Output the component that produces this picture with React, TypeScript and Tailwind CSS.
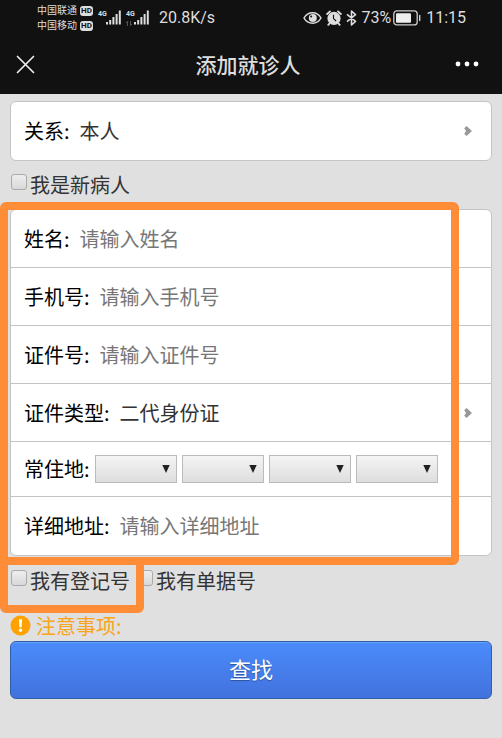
import { useState } from "react";
import type { ReactNode } from "react";

const regions = ["省", "市", "区县", "街道"];

export default function App() {
  const [relation, setRelation] = useState("本人");
  const [idType, setIdType] = useState("二代身份证");

  return (
    <div className="min-h-screen bg-[#e0e0e0] font-['Noto_Sans_CJK_SC',sans-serif] text-xl text-[#333]">
      <header className="bg-[#111] pb-[2px] text-[#ddd]">
        <StatusBar />
        <div className="grid h-14 grid-cols-[1fr_auto_1fr] items-center pr-[22px] pl-4">
          <button type="button" aria-label="关闭" className="justify-self-start">
            <svg width="19" height="19" viewBox="0 0 19 19" fill="none">
              <path
                d="M1.5 1.5l16 16M17.5 1.5l-16 16"
                stroke="#eee"
                strokeWidth="1.7"
                strokeLinecap="round"
              />
            </svg>
          </button>
          <h1 className="text-[21px] leading-7 font-medium">添加就诊人</h1>
          <button type="button" aria-label="更多" className="justify-self-end">
            <svg width="26" height="8" viewBox="0 0 26 8" fill="#fff">
              <circle cx="4" cy="4" r="2.4" />
              <circle cx="13" cy="4" r="2.4" />
              <circle cx="22" cy="4" r="2.4" />
            </svg>
          </button>
        </div>
      </header>

      <form className="px-[10px] pt-[7px]" onSubmit={(e) => e.preventDefault()}>
        <Card>
          <Row id="relation" label="关系:">
            <Picker
              id="relation"
              value={relation}
              options={["本人", "父母", "子女"]}
              onChange={setRelation}
            />
          </Row>
        </Card>

        <div className="flex h-12 items-center">
          <Check text="我是新病人" />
        </div>

        <div className="relative">
          <Card>
            <Row id="name" label="姓名:">
              <TextBox id="name" placeholder="请输入姓名" />
            </Row>
            <Row id="phone" label="手机号:">
              <TextBox id="phone" placeholder="请输入手机号" />
            </Row>
            <Row id="idNo" label="证件号:">
              <TextBox id="idNo" placeholder="请输入证件号" />
            </Row>
            <Row id="idType" label="证件类型:">
              <Picker
                id="idType"
                value={idType}
                options={["二代身份证", "护照"]}
                onChange={setIdType}
              />
            </Row>
            <div className="flex h-[55px] items-center gap-[5px] pr-[53px] pl-[13px]">
              <label htmlFor="region-0" className="shrink-0 text-black">
                常住地:
              </label>
              {regions.map((region, i) => (
                <div key={region} className="relative min-w-0 flex-1">
                  <select
                    id={`region-${i}`}
                    aria-label={region}
                    className="block h-7 w-full appearance-none border border-[#bbb] bg-linear-to-b from-[#f4f4f4] to-[#dedede]"
                  >
                    <option></option>
                  </select>
                  <svg
                    width="8"
                    height="8"
                    viewBox="0 0 8 8"
                    fill="#222"
                    className="pointer-events-none absolute top-[10px] right-[7px]"
                  >
                    <path d="M0.3 0h7.4L4 8z" />
                  </svg>
                </div>
              ))}
            </div>
            <Row id="address" label="详细地址:">
              <TextBox id="address" placeholder="请输入详细地址" />
            </Row>
          </Card>
          <div className="pointer-events-none absolute -top-[7px] right-[33px] -bottom-[9px] -left-[10px] rounded-md border-8 border-[#ff8c37]" />
        </div>

        <div className="flex h-[50px] items-center gap-[6px]">
          <div className="relative">
            <Check text="我有登记号" />
            <div className="pointer-events-none absolute -top-[10px] -right-[14px] -bottom-[18px] -left-[10px] rounded-b-md border-8 border-[#ff8c37]" />
          </div>
          <Check text="我有单据号" />
        </div>

        <p className="mt-1 flex h-[31px] items-center gap-[5px] text-[#f9a41a]">
          <svg width="21" height="21" viewBox="0 0 21 21">
            <circle cx="10.5" cy="10.5" r="10" fill="#ffa200" />
            <path d="M8.9 4.2h3.2l-.5 8.1H9.4z" fill="#fff" />
            <circle cx="10.5" cy="15.3" r="1.7" fill="#fff" />
          </svg>
          注意事项:
        </p>

        <button
          type="submit"
          className="block h-[58px] w-full rounded-md border border-[#2f5fa8] bg-linear-to-b from-[#4b8bfb] to-[#4272de] pb-1 text-[22px] text-white shadow-[inset_0_1px_0_#6b9ffc] text-shadow-[0_1px_1px_#2c559c]"
        >
          查找
        </button>
      </form>
    </div>
  );
}

function StatusBar() {
  return (
    <div className="flex h-9 items-center justify-between pr-9 pl-[37px] font-[Roboto,'Noto_Sans_CJK_SC',sans-serif] text-base">
      <div className="flex items-center">
        <div className="text-[10px] leading-[15px]">
          <Carrier name="中国联通" />
          <Carrier name="中国移动" />
        </div>
        <div className="ml-[5px] flex gap-[5px]">
          <Signal />
          <Signal dim />
        </div>
        <span className="ml-[10px]">20.8K/s</span>
      </div>
      <div className="flex items-center">
        <svg width="19" height="14" viewBox="0 0 19 14" fill="none">
          <path
            d="M1 7C3 3.4 6 1.8 9.5 1.8S16 3.4 18 7c-2 3.6-5 5.2-8.5 5.2S3 10.6 1 7z"
            stroke="#ddd"
            strokeWidth="1.5"
          />
          <circle cx="9.8" cy="7" r="4" fill="#ddd" />
          <circle cx="8.2" cy="5.4" r="1" fill="#111" />
        </svg>
        <svg width="16" height="16" viewBox="0 0 16 16" fill="none" className="ml-1">
          <circle cx="8" cy="8.4" r="6.6" fill="#ddd" />
          <path
            d="M1.2 4L4 1.4M14.8 4L12 1.4M3.6 13.4l-1.3 1.4M12.4 13.4l1.3 1.4"
            stroke="#ddd"
            strokeWidth="1.9"
            strokeLinecap="round"
          />
          <path d="M7.5 4.8v3.8l2.6 2.4" stroke="#111" strokeWidth="1.1" />
        </svg>
        <svg width="11" height="16" viewBox="0 0 11 16" fill="none" className="ml-1">
          <path
            d="M1 4.4l8.5 7L5.5 15V1l4 3.6-8.5 7"
            stroke="#ddd"
            strokeWidth="1.6"
            strokeLinejoin="round"
          />
        </svg>
        <span className="ml-1">73%</span>
        <svg width="28" height="16" viewBox="0 0 28 16" className="ml-[2px]">
          <rect
            x="0.8"
            y="0.9"
            width="23.4"
            height="14"
            rx="3"
            fill="none"
            stroke="#ccc"
            strokeWidth="1.3"
          />
          <rect x="3" y="3.2" width="15" height="9.6" rx="1" fill="#eee" />
          <rect x="26" y="4.8" width="1.4" height="6.4" rx="0.7" fill="#ccc" />
        </svg>
        <span className="ml-[5px]">11:15</span>
      </div>
    </div>
  );
}

function Carrier({ name }: { name: string }) {
  return (
    <div className="flex items-center gap-[3px]">
      {name}
      <span className="w-[13px] rounded-[3px] bg-[#ddd] text-center text-[8px] leading-[10px] font-bold text-[#111]">
        HD
      </span>
    </div>
  );
}

function Signal({ dim }: { dim?: boolean }) {
  return (
    <div className="flex h-4 items-start">
      <span className="w-2 text-[7px] leading-[8px] font-bold">4G</span>
      <svg width="15" height="16" viewBox="0 0 15 16" fill="#ddd">
        <rect x="0" y="12" width="2" height="2.5" />
        <rect x="3.2" y="10" width="2" height="4.5" />
        <rect x="6.4" y="7" width="2" height="7.5" />
        <rect x="9.6" y="4" width="2" height="10.5" />
        <rect x="12.8" y="0.5" width="2" height="14" />
      </svg>
      {dim && (
        <svg
          width="6"
          height="5"
          viewBox="0 0 6 5"
          className="order-first -mr-[6px] self-end"
          stroke="#555"
          fill="none"
        >
          <path d="M1.5 5V0.5L0 2M4.5 0v4.5L6 3" />
        </svg>
      )}
    </div>
  );
}

function Card({ children }: { children: ReactNode }) {
  return (
    <div className="divide-y divide-[#c4c4c4] rounded-md border border-[#c4c4c4] bg-white">
      {children}
    </div>
  );
}

function Row({
  id,
  label,
  children,
}: {
  id: string;
  label: string;
  children: ReactNode;
}) {
  return (
    <div className="flex h-[58px] items-center gap-[10px] px-[13px]">
      <label htmlFor={id} className="shrink-0 text-black">
        {label}
      </label>
      {children}
    </div>
  );
}

function TextBox({ id, placeholder }: { id: string; placeholder: string }) {
  return (
    <input
      id={id}
      type="text"
      placeholder={placeholder}
      className="min-w-0 flex-1 outline-none placeholder:text-[#777]"
    />
  );
}

function Picker({
  id,
  value,
  options,
  onChange,
}: {
  id: string;
  value: string;
  options: string[];
  onChange: (value: string) => void;
}) {
  return (
    <div className="flex min-w-0 flex-1 items-center">
      <select
        id={id}
        value={value}
        onChange={(e) => onChange(e.target.value)}
        className="min-w-0 flex-1 appearance-none outline-none"
      >
        {options.map((option) => (
          <option key={option}>{option}</option>
        ))}
      </select>
      <svg width="8" height="10" viewBox="0 0 8 10" className="mr-[6px]">
        <path d="M2.6 0L8 5l-5.4 5L0.2 7.8 2 5 0.2 2.2z" fill="#999" />
      </svg>
    </div>
  );
}

function Check({ text }: { text: string }) {
  return (
    <label className="flex items-start gap-[3px] pl-px leading-7">
      <input
        type="checkbox"
        className="mt-[3px] size-4 appearance-none rounded-[3px] border border-[#aaa] bg-linear-to-b from-[#eee] to-[#d8d8d8] checked:from-[#4b8bfb] checked:to-[#4272de]"
      />
      {text}
    </label>
  );
}
